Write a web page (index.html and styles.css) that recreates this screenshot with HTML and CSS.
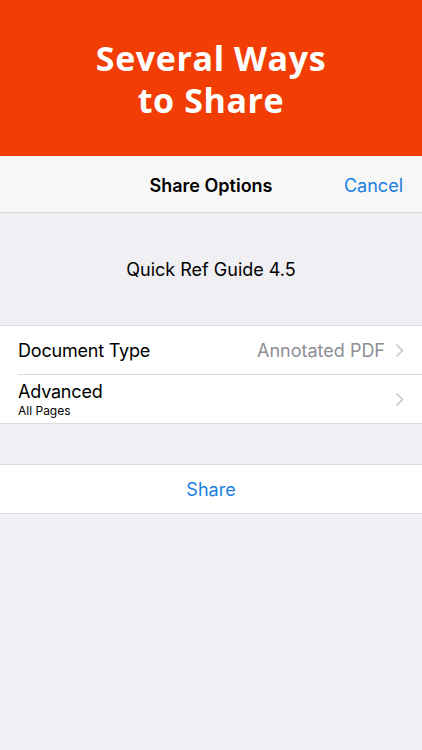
FILE: index.html
```html
<!DOCTYPE html>
<html lang="en">
<head>
  <meta charset="UTF-8" />
  <meta name="viewport" content="width=device-width, initial-scale=1.0"/>
  <title>Share Options</title>
  <link rel="stylesheet" href="styles.css">
</head>
<body>
  <header class="banner">
    <h1 class="banner-title">Several Ways<br>to Share</h1>
  </header>

  <div class="navbar">
    <span class="nav-side"></span>
    <span class="nav-title">Share Options</span>
    <span class="nav-side nav-action">Cancel</span>
  </div>

  <div class="doc-name">Quick Ref Guide 4.5</div>

  <div class="group">
    <div class="row">
      <div class="row-label">Document Type</div>
      <div class="row-value">Annotated PDF</div>
      <svg class="chevron" width="9" height="15" viewBox="0 0 9 15"><path d="M1.5 1.5 L7.5 7.5 L1.5 13.5" fill="none" stroke="#c7c7cc" stroke-width="1.6"/></svg>
    </div>
    <div class="row row-tall">
      <div class="row-label">
        Advanced
        <div class="row-sub">All Pages</div>
      </div>
      <svg class="chevron" width="9" height="15" viewBox="0 0 9 15"><path d="M1.5 1.5 L7.5 7.5 L1.5 13.5" fill="none" stroke="#c7c7cc" stroke-width="1.6"/></svg>
    </div>
  </div>

  <div class="group group-action">
    <button class="share-button">Share</button>
  </div>
</body>
</html>
```

FILE: styles.css
```css
body {
  margin: 0;
  font-family: Inter, Roboto, "Liberation Sans", sans-serif;
  background: #efeff4;
  color: #000;
  min-height: 100vh;
}

/* Bandeau orange */
.banner {
  background: #f23d05;
  height: 156px;
  display: flex;
  align-items: center;
  justify-content: center;
}

.banner-title {
  margin: 0;
  color: #fff;
  font-family: "Open Sans", sans-serif;
  font-weight: 700;
  font-size: 34px;
  line-height: 42px;
  letter-spacing: 0.6px;
  text-align: center;
  padding-top: 1px;
}

.navbar {
  background: #f7f7f7;
  height: 54px;
  border-bottom: 1px solid #d4d4d6;
  display: flex;
  align-items: center;
  padding: 2px 19px 0;
}

.nav-side {
  flex: 1;
}

.nav-title {
  font-size: 18px;
  font-weight: 600;
}

.nav-action {
  text-align: right;
  color: #1a7fe0;
  font-size: 18px;
}

.doc-name {
  text-align: center;
  font-size: 18px;
  padding: 46px 0 0;
  height: 66px;
}

.group {
  background: #fff;
  border-top: 1px solid #dcdce0;
  border-bottom: 1px solid #dcdce0;
}

.row {
  display: flex;
  align-items: center;
  height: 48px;
  margin-left: 18px;
  padding-right: 18px;
}

.row + .row {
  border-top: 1px solid #dcdce0;
}

.row-label {
  flex: 1;
  font-size: 18px;
  letter-spacing: -0.2px;
}

.row-sub {
  font-size: 12px;
  margin-top: 1px;
  letter-spacing: 0;
}

.row-value {
  color: #8e8e93;
  font-size: 18px;
  margin-right: 10px;
}

.group-action {
  margin-top: 40px;
}

.share-button {
  display: block;
  width: 100%;
  height: 48px;
  border: none;
  background: #fff;
  color: #1a7fe0;
  font-family: inherit;
  font-size: 18px;
  cursor: pointer;
}
```
